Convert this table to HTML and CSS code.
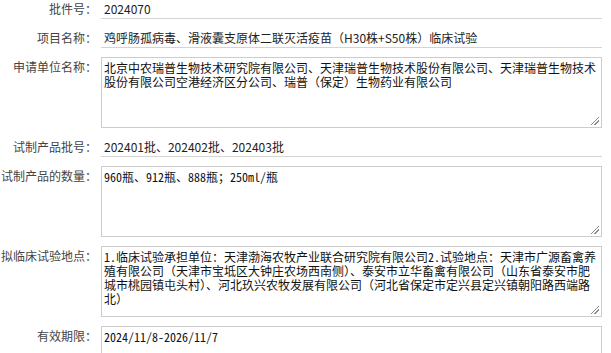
FILE: index.html
```html
<!DOCTYPE html>
<html lang="zh-CN">
<head>
<meta charset="utf-8">
<title>批件信息</title>
<link rel="stylesheet" href="styles.css">
</head>
<body>
<form class="form">
  <div class="row">
    <label class="lbl">批件号：</label>
    <input class="inp" type="text" value="2024070" readonly>
  </div>
  <div class="row">
    <label class="lbl">项目名称：</label>
    <input class="inp" type="text" value="鸡呼肠孤病毒、滑液囊支原体二联灭活疫苗（H30株+S50株）临床试验" readonly>
  </div>
  <div class="row">
    <label class="lbl">申请单位名称：</label>
    <textarea class="ta" readonly>北京中农瑞普生物技术研究院有限公司、天津瑞普生物技术股份有限公司、天津瑞普生物技术股份有限公司空港经济区分公司、瑞普（保定）生物药业有限公司</textarea>
  </div>
  <div class="row">
    <label class="lbl">试制产品批号：</label>
    <input class="inp" type="text" value="202401批、202402批、202403批" readonly>
  </div>
  <div class="row">
    <label class="lbl">试制产品的数量：</label>
    <textarea class="ta" readonly>960瓶、912瓶、888瓶；250ml/瓶</textarea>
  </div>
  <div class="row">
    <label class="lbl">拟临床试验地点：</label>
    <textarea class="ta" readonly>1.临床试验承担单位：天津渤海农牧产业联合研究院有限公司2.试验地点：天津市广源畜禽养殖有限公司（天津市宝坻区大钟庄农场西南侧）、泰安市立华畜禽有限公司（山东省泰安市肥城市桃园镇屯头村）、河北玖兴农牧发展有限公司（河北省保定市定兴县定兴镇朝阳路西端路北）</textarea>
  </div>
  <div class="row">
    <label class="lbl">有效期限：</label>
    <textarea class="ta" readonly>2024/11/8-2026/11/7</textarea>
  </div>
</form>
</body>
</html>
```
FILE: styles.css
```css
html, body {
  margin: 0;
  padding: 0;
  background: #ffffff;
}
body {
  font-family: "Noto Sans CJK SC", "Noto Sans", sans-serif;
  overflow: hidden;
}
.form {
  display: flex;
  flex-direction: column;
  gap: 9px;
  width: 602px;
  margin: -1px 0 0 0;
}
.row {
  display: flex;
  align-items: flex-start;
}
.lbl {
  flex: none;
  width: 97px;
  text-align: right;
  font-size: 12px;
  line-height: 20px;
  color: #444;
  white-space: nowrap;
}
.inp {
  flex: none;
  margin: 0 0 0 4px;
  width: 501px;
  height: 20px;
  box-sizing: border-box;
  border: 0;
  border-bottom: 1px solid #d4d4d4;
  padding: 0 3px;
  font-family: "Noto Sans CJK SC", "Noto Sans", sans-serif;
  font-size: 12px;
  color: #222;
  background: #fff;
  outline: none;
}
.ta {
  flex: none;
  margin: 0 0 0 4px;
  width: 501px;
  height: 71px;
  box-sizing: border-box;
  border: 1px solid #cccccc;
  padding: 3px 2px;
  font-family: "Noto Sans Mono CJK SC", "Liberation Mono", "Noto Sans CJK SC", monospace;
  font-size: 12px;
  line-height: 14px;
  color: #111;
  background-color: #fff;
  background-image: linear-gradient(135deg, transparent 0 52%, #8a8a8a 52% 60%, transparent 60% 72%, #8a8a8a 72% 80%, transparent 80%);
  background-repeat: no-repeat;
  background-size: 9px 9px;
  background-position: right 2px bottom 2px;
  outline: none;
  resize: none;
  overflow: hidden;
}
```
